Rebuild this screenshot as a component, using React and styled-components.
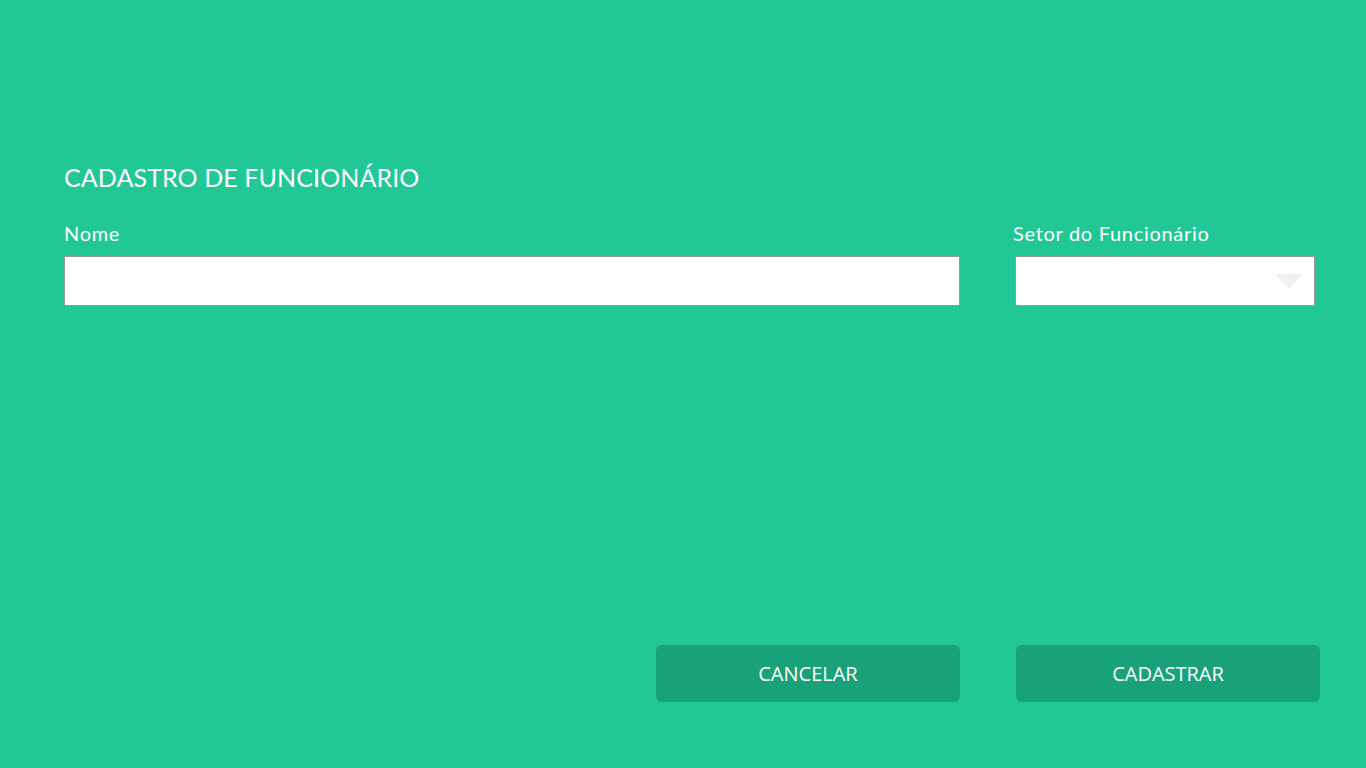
import styled, { createGlobalStyle } from "styled-components";

const GlobalStyle = createGlobalStyle`
  html, body {
    margin: 0;
    padding: 0;
    background: #22c796;
  }
  * { box-sizing: border-box; }
`;

const Page = styled.div`
  width: 1366px;
  height: 768px;
  background: #22c796;
  padding: 160px 46px 0 64px;
  display: flex;
  flex-direction: column;
  font-family: Lato, "Liberation Sans", sans-serif;
  color: #fff;
`;

const Title = styled.h1`
  margin: 0;
  font-size: 25px;
  font-weight: 400;
  letter-spacing: 0.1px;
  line-height: 34px;
`;

const FieldsRow = styled.div`
  display: flex;
  gap: 55px;
  margin-top: 26px;
`;

const Field = styled.div`
  display: flex;
  flex-direction: column;
  width: ${(p) => p.width}px;
`;

const Label = styled.label`
  font-size: 20px;
  line-height: 26px;
  margin-bottom: 10px;
  margin-left: ${(p) => p.shift || 0}px;
  letter-spacing: 0.7px;
`;

const Input = styled.input`
  height: 50px;
  border: 1px solid #9a9a9a;
  background: #fff;
  outline: none;
  font-size: 18px;
  padding: 0 10px;
`;

const Select = styled.div`
  position: relative;
  height: 50px;
  border: 1px solid #9a9a9a;
  background: #fff;
`;

const Arrow = styled.span`
  position: absolute;
  right: 11px;
  top: 17px;
  width: 0;
  height: 0;
  border-left: 14px solid transparent;
  border-right: 14px solid transparent;
  border-top: 15px solid #f0f0f0;
`;

const Actions = styled.div`
  display: flex;
  justify-content: flex-end;
  gap: 56px;
  margin-top: auto;
  margin-bottom: 66px;
`;

const Button = styled.button`
  width: 304px;
  height: 57px;
  border: none;
  border-radius: 6px;
  background: #19a27a;
  color: #fff;
  font-family: "Open Sans", "Noto Sans", sans-serif;
  font-size: 20px;
  cursor: pointer;
`;

export default function App() {
  return (
    <Page>
      <GlobalStyle />
      <Title>CADASTRO DE FUNCIONÁRIO</Title>
      <FieldsRow>
        <Field width={896}>
          <Label>Nome</Label>
          <Input type="text" />
        </Field>
        <Field width={300}>
          <Label shift={-2}>Setor do Funcionário</Label>
          <Select>
            <Arrow />
          </Select>
        </Field>
      </FieldsRow>
      <Actions>
        <Button>CANCELAR</Button>
        <Button>CADASTRAR</Button>
      </Actions>
    </Page>
  );
}
